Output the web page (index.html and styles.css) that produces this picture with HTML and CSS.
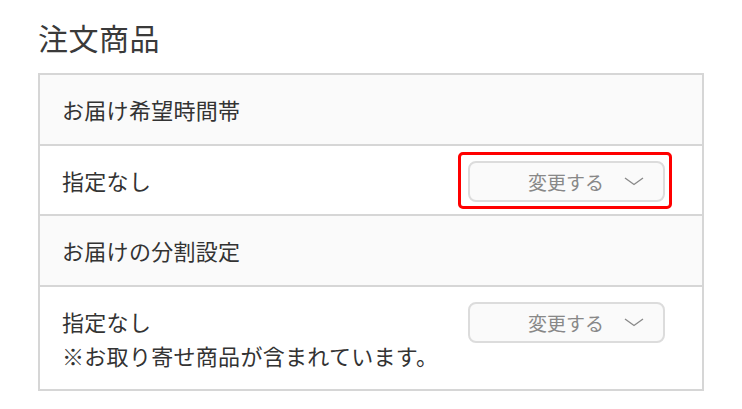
FILE: index.html
```html
<!DOCTYPE html>
<html lang="ja">
<head>
    <meta charset="UTF-8">
    <meta name="viewport" content="width=device-width, initial-scale=1.0">
    <title>注文商品</title>
    <link rel="stylesheet" href="styles.css">
</head>
<body>

<div class="container">
    <h2 class="title">注文商品</h2>
    <div class="order-box">
        <div class="row row-head">お届け希望時間帯</div>
        <div class="row">
            <div class="row-text">指定なし</div>
            <button type="button" class="change-btn highlight">
                <span>変更する</span>
                <svg width="20" height="9" viewBox="0 0 20 9"><polyline points="1,1 10,7.5 19,1" fill="none" stroke="#8a8a8a" stroke-width="1.4"/></svg>
            </button>
        </div>
        <div class="row row-head">お届けの分割設定</div>
        <div class="row">
            <div class="row-text">指定なし<br>※お取り寄せ商品が含まれています。</div>
            <button type="button" class="change-btn">
                <span>変更する</span>
                <svg width="20" height="9" viewBox="0 0 20 9"><polyline points="1,1 10,7.5 19,1" fill="none" stroke="#8a8a8a" stroke-width="1.4"/></svg>
            </button>
        </div>
    </div>
</div>

</body>
</html>
```

FILE: styles.css
```css
body {
    margin: 0;
    font-family: "Noto Sans CJK JP", "Noto Sans", sans-serif;
    background-color: #fff;
    color: #333;
}
.container {
    padding: 18px 38px 0 38px;
}
.title {
    margin: 0 0 17px 0;
    font-size: 30px;
    font-weight: normal;
    letter-spacing: 0.5px;
    line-height: 38px;
    color: #3a3a3a;
}
.order-box {
    border: 2px solid #d6d6d6;
}
.row {
    display: flex;
    justify-content: space-between;
    align-items: flex-start;
    padding: 17px 37px 17.5px 22px;
    font-size: 22px;
    letter-spacing: 0.3px;
    line-height: 34px;
    border-top: 2px solid #d6d6d6;
}
.row:first-child {
    border-top: none;
}
.row-head {
    background-color: #fafafa;
}
.change-btn {
    position: relative;
    display: flex;
    justify-content: flex-end;
    align-items: center;
    gap: 20px;
    width: 197px;
    height: 41px;
    margin: -2px 0 -8px 0;
    padding: 0 19px 0 0;
    background-color: #fafafa;
    border: 2px solid #dcdcdc;
    border-radius: 8px;
    font-family: inherit;
    font-size: 19px;
    letter-spacing: 0;
    color: #888;
    cursor: pointer;
}
.change-btn svg {
    margin-top: 1px;
}
.highlight::after {
    content: "";
    position: absolute;
    top: -11px;
    left: -12px;
    right: -9px;
    bottom: -9px;
    border: 3px solid #f00;
    border-radius: 5px;
}
```
